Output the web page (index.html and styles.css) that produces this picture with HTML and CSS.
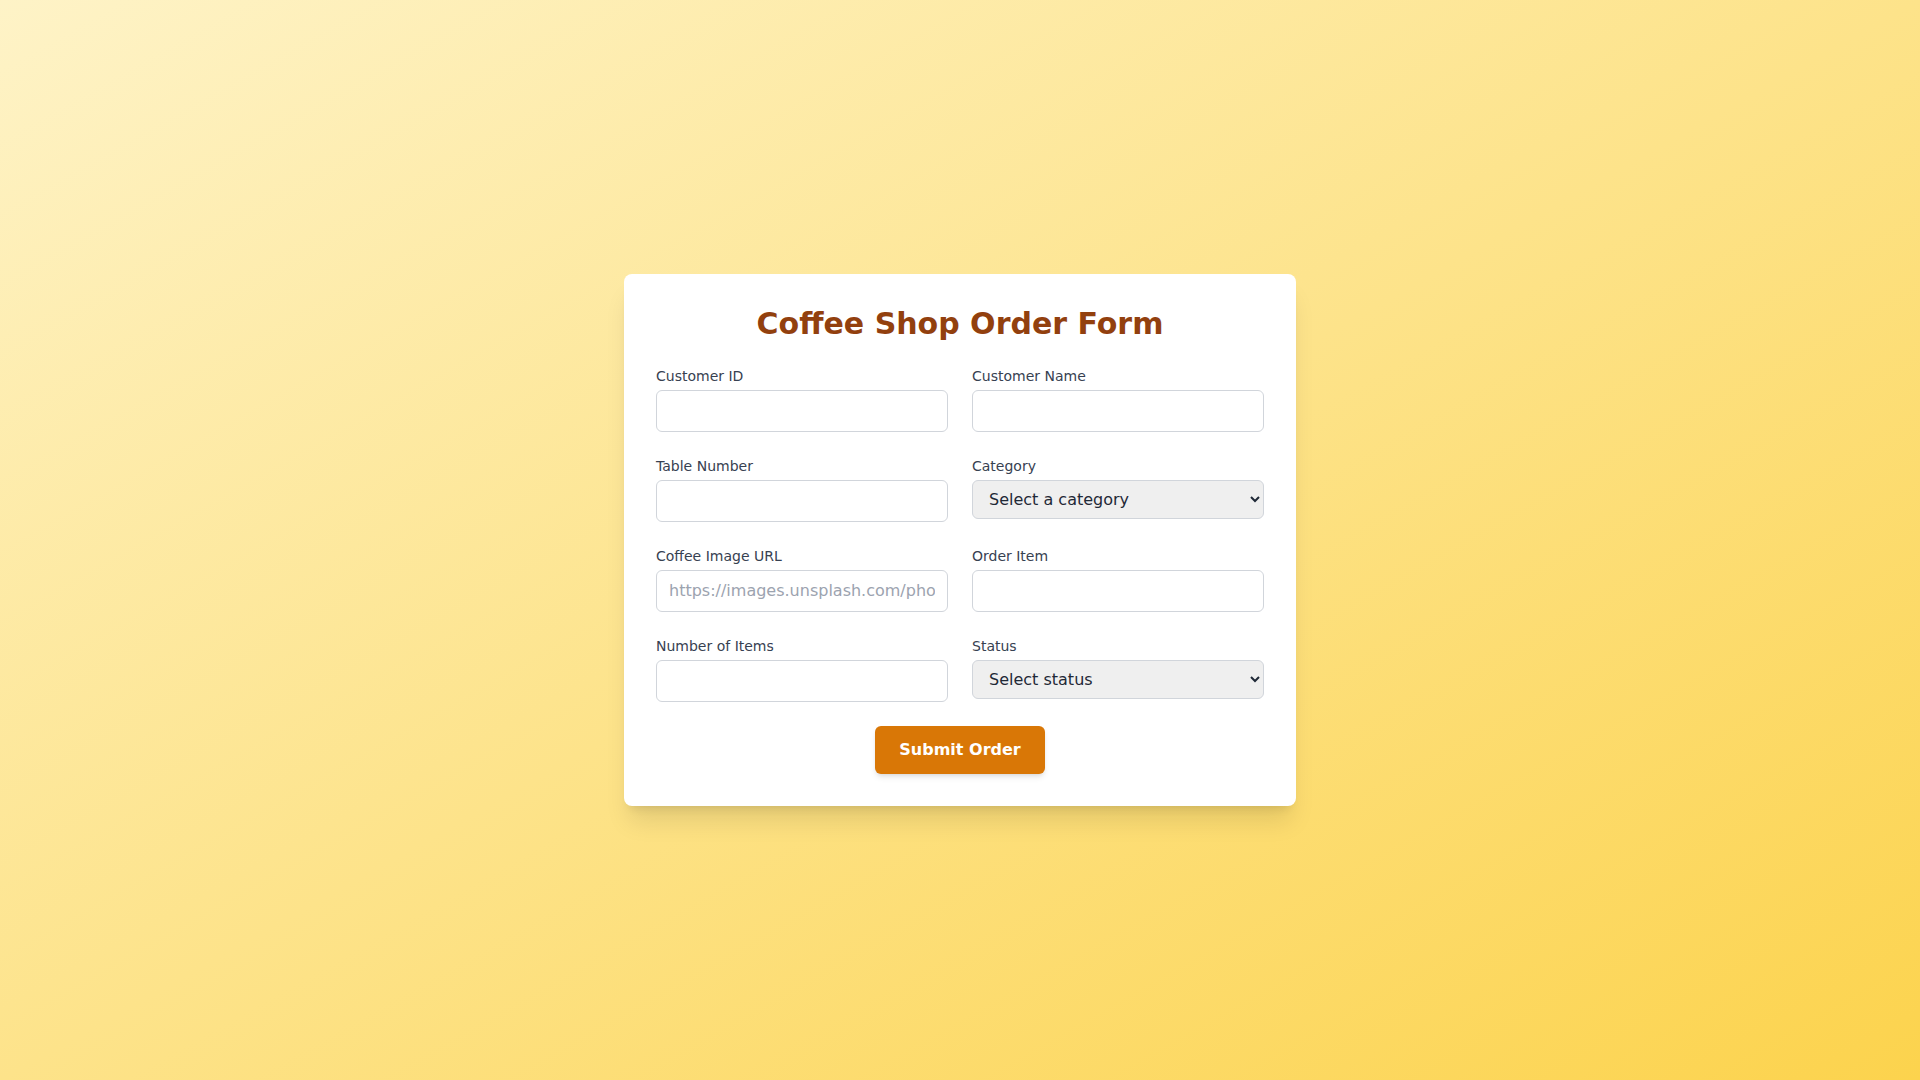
FILE: index.html
```html
<!DOCTYPE html>
<html lang="en">
<head>
<meta charset="UTF-8">
<title>Coffee Shop Order Form</title>
<link rel="stylesheet" href="styles.css">
</head>
<body>
<main class="page">
  <form class="card">
    <h1 class="title">Coffee Shop Order Form</h1>
    <div class="grid">
      <div class="field">
        <label class="label" for="cid">Customer ID</label>
        <input class="control" id="cid" type="text">
      </div>
      <div class="field">
        <label class="label" for="cname">Customer Name</label>
        <input class="control" id="cname" type="text">
      </div>
      <div class="field">
        <label class="label" for="table">Table Number</label>
        <input class="control" id="table" type="text">
      </div>
      <div class="field">
        <label class="label" for="cat">Category</label>
        <select class="control select" id="cat">
          <option>Select a category</option>
        </select>
      </div>
      <div class="field">
        <label class="label" for="img">Coffee Image URL</label>
        <input class="control" id="img" type="text" placeholder="https://images.unsplash.com/photo-1509042239860-f550ce710b93">
      </div>
      <div class="field">
        <label class="label" for="item">Order Item</label>
        <input class="control" id="item" type="text">
      </div>
      <div class="field">
        <label class="label" for="num">Number of Items</label>
        <input class="control" id="num" type="text">
      </div>
      <div class="field">
        <label class="label" for="status">Status</label>
        <select class="control select" id="status">
          <option>Select status</option>
        </select>
      </div>
    </div>
    <div class="actions">
      <button class="submit" type="button">Submit Order</button>
    </div>
  </form>
</main>
</body>
</html>
```

FILE: styles.css
```css
* {
  box-sizing: border-box;
}

html, body {
  margin: 0;
  padding: 0;
}

body {
  font-family: "DejaVu Sans", sans-serif;
  background: linear-gradient(to bottom right, #fef3c7, #fcd34d);
  min-height: 100vh;
}

.page {
  min-height: 100vh;
  display: flex;
  align-items: center;
  justify-content: center;
}

.card {
  width: 672px;
  background: #ffffff;
  padding: 32px;
  border-radius: 8px;
  box-shadow: 0 20px 25px -5px rgba(0, 0, 0, 0.1), 0 8px 10px -6px rgba(0, 0, 0, 0.1);
}

.title {
  margin: 0 0 24px 0;
  text-align: center;
  font-size: 30px;
  line-height: 36px;
  font-weight: 700;
  color: #92400e;
}

.grid {
  display: grid;
  grid-template-columns: 1fr 1fr;
  gap: 24px;
}

.field {
  display: flex;
  flex-direction: column;
}

.label {
  font-size: 14px;
  line-height: 20px;
  color: #374151;
  margin-bottom: 4px;
}

.control {
  width: 100%;
  margin: 0;
  font-family: inherit;
  font-size: 16px;
  line-height: 24px;
  color: #1f2937;
  padding: 8px 12px;
  border: 1px solid #d1d5db;
  border-radius: 6px;
  background: #ffffff;
  outline: none;
}

.control::placeholder {
  color: #9ca3af;
}

.select {
  background-color: #efefef;
  color: #1f2937;
}

.actions {
  display: flex;
  justify-content: center;
  margin-top: 24px;
}

.submit {
  font-family: inherit;
  font-size: 16px;
  line-height: 24px;
  font-weight: 700;
  color: #ffffff;
  background: #d97706;
  border: none;
  border-radius: 6px;
  padding: 12px 24px;
  box-shadow: 0 4px 6px -1px rgba(0, 0, 0, 0.1), 0 2px 4px -2px rgba(0, 0, 0, 0.1);
  cursor: pointer;
}
```
